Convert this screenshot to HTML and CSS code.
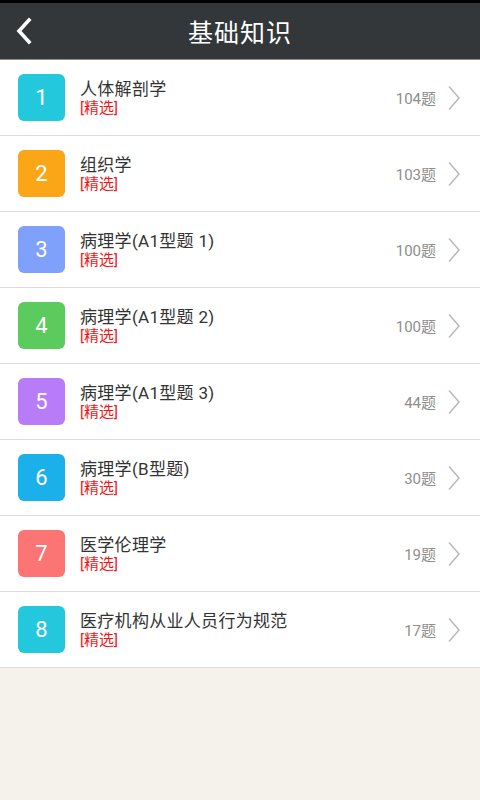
FILE: index.html
```html
<!DOCTYPE html>
<html lang="zh">
<head>
<meta charset="utf-8">
<link rel="stylesheet" href="styles.css">
</head>
<body>
<div class="status"></div>
<header class="topbar">
  <svg class="back" width="20" height="28" viewBox="0 0 20 28"><path d="M15 3 L5 14 L15 25" fill="none" stroke="#fff" stroke-width="3.6" stroke-linecap="square"/></svg>
  <h1>基础知识</h1>
</header>
<ul class="list">
  <li class="row"><span class="num c1">1</span><div class="info"><div class="title">人体解剖学</div><div class="tag">[精选]</div></div><span class="count">104题</span><svg class="chev" width="14" height="26" viewBox="0 0 14 26"><path d="M2 1.5 L12 13 L2 24.5" fill="none" stroke="#bbb" stroke-width="1.6"/></svg></li>
  <li class="row"><span class="num c2">2</span><div class="info"><div class="title">组织学</div><div class="tag">[精选]</div></div><span class="count">103题</span><svg class="chev" width="14" height="26" viewBox="0 0 14 26"><path d="M2 1.5 L12 13 L2 24.5" fill="none" stroke="#bbb" stroke-width="1.6"/></svg></li>
  <li class="row"><span class="num c3">3</span><div class="info"><div class="title">病理学(A1型题 1)</div><div class="tag">[精选]</div></div><span class="count">100题</span><svg class="chev" width="14" height="26" viewBox="0 0 14 26"><path d="M2 1.5 L12 13 L2 24.5" fill="none" stroke="#bbb" stroke-width="1.6"/></svg></li>
  <li class="row"><span class="num c4">4</span><div class="info"><div class="title">病理学(A1型题 2)</div><div class="tag">[精选]</div></div><span class="count">100题</span><svg class="chev" width="14" height="26" viewBox="0 0 14 26"><path d="M2 1.5 L12 13 L2 24.5" fill="none" stroke="#bbb" stroke-width="1.6"/></svg></li>
  <li class="row"><span class="num c5">5</span><div class="info"><div class="title">病理学(A1型题 3)</div><div class="tag">[精选]</div></div><span class="count">44题</span><svg class="chev" width="14" height="26" viewBox="0 0 14 26"><path d="M2 1.5 L12 13 L2 24.5" fill="none" stroke="#bbb" stroke-width="1.6"/></svg></li>
  <li class="row"><span class="num c6">6</span><div class="info"><div class="title">病理学(B型题)</div><div class="tag">[精选]</div></div><span class="count">30题</span><svg class="chev" width="14" height="26" viewBox="0 0 14 26"><path d="M2 1.5 L12 13 L2 24.5" fill="none" stroke="#bbb" stroke-width="1.6"/></svg></li>
  <li class="row"><span class="num c7">7</span><div class="info"><div class="title">医学伦理学</div><div class="tag">[精选]</div></div><span class="count">19题</span><svg class="chev" width="14" height="26" viewBox="0 0 14 26"><path d="M2 1.5 L12 13 L2 24.5" fill="none" stroke="#bbb" stroke-width="1.6"/></svg></li>
  <li class="row"><span class="num c8">8</span><div class="info"><div class="title">医疗机构从业人员行为规范</div><div class="tag">[精选]</div></div><span class="count">17题</span><svg class="chev" width="14" height="26" viewBox="0 0 14 26"><path d="M2 1.5 L12 13 L2 24.5" fill="none" stroke="#bbb" stroke-width="1.6"/></svg></li>
</ul>
</body>
</html>
```

FILE: styles.css
```css
html, body {
  margin: 0;
  padding: 0;
  background: #f5f2eb;
  font-family: Roboto, "Noto Sans CJK SC", sans-serif;
}
.status {
  height: 3px;
  background: #000;
}
.topbar {
  height: 56px;
  background: #33373a;
  border-bottom: 1px solid #8c8f91;
  display: flex;
  align-items: center;
  justify-content: center;
  position: relative;
}
.back {
  position: absolute;
  left: 14px;
  top: 14px;
}
.topbar h1 {
  margin: 0;
  color: #fff;
  font-size: 25px;
  font-weight: normal;
  letter-spacing: 1px;
  font-family: "Noto Sans CJK SC", sans-serif;
}
.list {
  list-style: none;
  margin: 0;
  padding: 0;
  background: #fff;
}
.row {
  height: 75px;
  border-bottom: 1px solid #dcdcdc;
  display: flex;
  align-items: center;
  padding: 0 19px 0 18px;
}
.num {
  width: 47px;
  height: 47px;
  border-radius: 6px;
  color: #fff;
  font-size: 22px;
  display: flex;
  align-items: center;
  justify-content: center;
  flex-shrink: 0;
}
.c1, .c8 { background: #24c8dc; }
.c2 { background: #fba617; }
.c3 { background: #7fa0fb; }
.c4 { background: #5ccb5d; }
.c5 { background: #b97cf8; }
.c6 { background: #1cb0ea; }
.c7 { background: #fc7474; }
.info {
  flex: 1;
  margin-left: 15px;
  margin-top: 1px;
}
.title {
  font-size: 17px;
  color: #333;
  line-height: 20px;
  letter-spacing: 0.3px;
}
.tag {
  font-size: 15px;
  color: #f41515;
  line-height: 18px;
  margin-top: 0;
}
.count {
  font-size: 15px;
  color: #8e8e8e;
  margin-right: 11px;
}
.chev {
  display: block;
}
```
